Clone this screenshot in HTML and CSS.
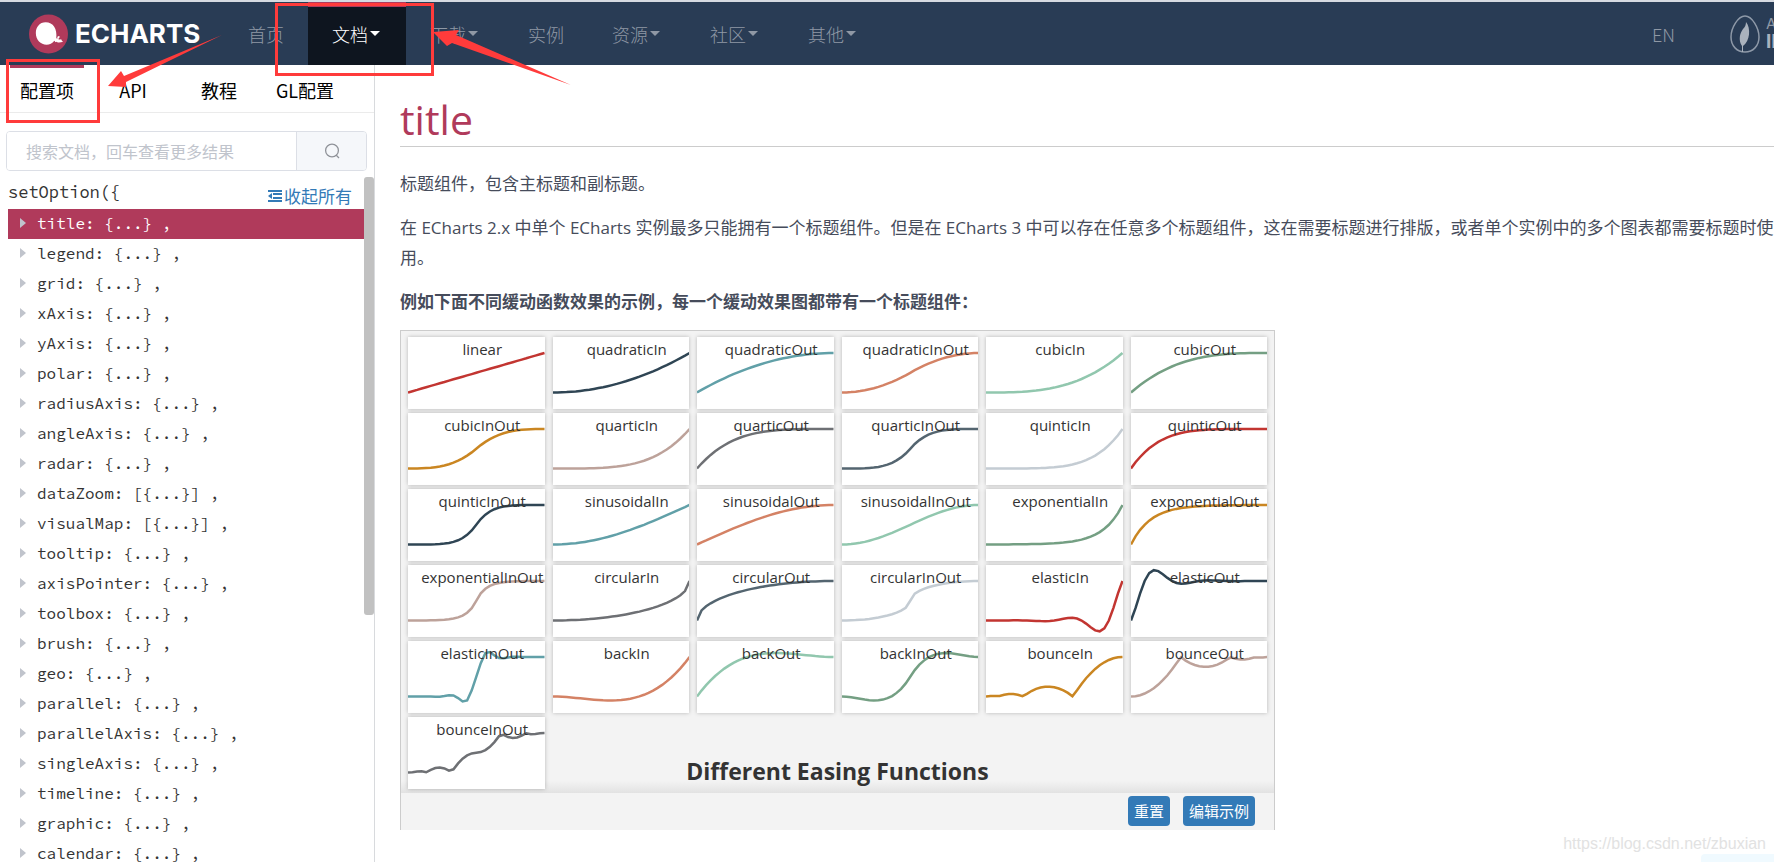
FILE: index.html
```html
<!DOCTYPE html>
<html lang="zh">
<head>
<meta charset="utf-8">
<title>ECharts 配置项手册</title>
<link rel="stylesheet" href="styles.css">
</head>
<body>
<header class="navbar">
  <a class="brand" href="#">
    <svg class="brand-mark" viewBox="0 0 40 40" aria-hidden="true">
      <circle cx="20" cy="20" r="20" fill="#b03a5b"/>
      <path d="M17 8C11 8 7 13 7 19c0 7 5 12 11 12 3 0 6-1 8-4 1 1 1 2 2 1 1 1 4 1 7 0-1-1-2-2-2-3-1 1-2 1-3 0 1-1 2-2 1-3-2 0-2 1-2 3l-1-1C29 15 25 8 17 8z" fill="#fff"/>
    </svg>
    <span class="brand-name">ECHARTS</span>
  </a>
  <nav class="menu">
    <a href="#">首页</a>
    <a class="active caret" href="#">文档</a>
    <a class="caret" href="#">下载</a>
    <a href="#">实例</a>
    <a class="caret" href="#">资源</a>
    <a class="caret" href="#">社区</a>
    <a class="caret" href="#">其他</a>
  </nav>
  <div class="nav-right">
    <a class="lang" href="#">EN</a>
    <a class="incubator" href="#">
      <svg class="feather" viewBox="0 0 30 38" aria-hidden="true">
        <path d="M15 1C8 1 1 13 1 22c0 9 6 15 14 15s14-6 14-15C29 13 22 1 15 1z" fill="none" stroke="#8e99a8" stroke-width="1.5"/>
        <path d="M16 7c5 6 4 19-3 24v6h-1v-6c-4-6-2-13 1-17 2-2 3-4 3-7z" fill="#aab2bd"/>
      </svg>
      <span class="incubator-text"><span class="apache">APACHE</span><span class="inc">INCUBATOR</span></span>
    </a>
  </div>
</header>

<div class="page">
  <aside class="sidebar">
    <nav class="tabs">
      <a class="current" href="#">配置项</a>
      <a href="#">API</a>
      <a href="#">教程</a>
      <a href="#">GL配置</a>
    </nav>
    <form class="search">
      <input type="text" aria-label="搜索文档" placeholder="搜索文档，回车查看更多结果">
      <button type="button" aria-label="搜索">
        <svg viewBox="0 0 16 16" aria-hidden="true"><circle cx="8" cy="7.5" r="6.4"/><path d="M12 12l3 3"/></svg>
      </button>
    </form>
    <div class="tree-wrap">
      <div class="tree">
        <div class="tree-head">
          <span>setOption({</span>
          <a class="collapse" href="#"><svg viewBox="0 0 14 12" aria-hidden="true"><path d="M0 1h14M5 4h9M5 8h9M0 11h14"/><path d="M4 3v6L0 6z" stroke="none" fill="#337ab7"/></svg>收起所有</a>
        </div>
        <ul class="options">
          <li class="selected">title: {...} ,</li>
          <li>legend: {...} ,</li>
          <li>grid: {...} ,</li>
          <li>xAxis: {...} ,</li>
          <li>yAxis: {...} ,</li>
          <li>polar: {...} ,</li>
          <li>radiusAxis: {...} ,</li>
          <li>angleAxis: {...} ,</li>
          <li>radar: {...} ,</li>
          <li>dataZoom: [{...}] ,</li>
          <li>visualMap: [{...}] ,</li>
          <li>tooltip: {...} ,</li>
          <li>axisPointer: {...} ,</li>
          <li>toolbox: {...} ,</li>
          <li>brush: {...} ,</li>
          <li>geo: {...} ,</li>
          <li>parallel: {...} ,</li>
          <li>parallelAxis: {...} ,</li>
          <li>singleAxis: {...} ,</li>
          <li>timeline: {...} ,</li>
          <li>graphic: {...} ,</li>
          <li>calendar: {...} ,</li>
        </ul>
      </div>
      <div class="scrollbar"><div class="thumb"></div></div>
    </div>
  </aside>

  <main class="content">
    <article>
      <h1>title</h1>
      <p>标题组件，包含主标题和副标题。</p>
      <p>在 ECharts 2.x 中单个 ECharts 实例最多只能拥有一个标题组件。但是在 ECharts 3 中可以存在任意多个标题组件，这在需要标题进行排版，或者单个实例中的多个图表都需要标题时使<br>用。</p>
      <p><strong>例如下面不同缓动函数效果的示例，每一个缓动效果图都带有一个标题组件：</strong></p>
      <section class="example">
        <div class="chart">
          <div class="cells" id="cells"></div>
          <h2>Different Easing Functions</h2>
        </div>
        <div class="example-bar">
          <button type="button">重置</button>
          <button type="button">编辑示例</button>
        </div>
      </section>
    </article>
  </main>
</div>

<div class="mark mark-tab"></div>
<div class="mark mark-menu"></div>
<svg class="arrow arrow-tab" viewBox="0 0 116 54" aria-hidden="true"><path d="M1 52L14 37l3 5L115 1 19 48l0 5z"/></svg>
<svg class="arrow arrow-menu" viewBox="0 0 140 56" aria-hidden="true"><path d="M1 2l26-2-3 5L139 55 20 13l-5 3z"/></svg>
<div class="watermark">https://blog.csdn.net/zbuxian</div>
<div class="corner"></div>
<script src="easing.js"></script>
</body>
</html>
```
FILE: styles.css
```css
* { box-sizing: border-box; }
body {
  margin: 0;
  height: 100vh;
  overflow: hidden;
  display: flex;
  flex-direction: column;
  border-top: 2px solid #d6dae1;
  background: #fff;
  color: #464c5b;
  font: 17px/30px "Open Sans", "Noto Sans CJK SC", sans-serif;
}
a { text-decoration: none; color: inherit; }
button, input { font: inherit; }

.navbar {
  flex: none;
  height: 63px;
  display: flex;
  overflow: hidden;
  background: #293c55;
  color: #8f98a5;
  font-family: "Noto Sans CJK SC", sans-serif;
  font-size: 18px;
  font-weight: 300;
}
.brand { display: flex; align-items: center; gap: 7px; width: 224px; padding-left: 29px; flex: none; color: #fff; }
.brand-mark { width: 39px; height: 40px; }
.brand-name { font: 700 26px/40px Inter, sans-serif; }
.menu { display: flex; }
.menu a { display: flex; align-items: center; padding: 0 24px; border-top: 5px solid transparent; border-bottom: 5px solid transparent; }
.menu .caret { padding-right: 26px; }
.menu .caret::after { content: ""; margin-left: 2px; border: 5px solid transparent; border-top-color: currentColor; border-bottom: 0; }
.menu .active { background: #0e151f; color: #fff; border-top-color: #b03a5b; border-bottom-color: #0e151f; }
.nav-right { margin-left: auto; display: flex; align-items: center; }
.lang { margin-right: 55px; }
.incubator { display: flex; align-items: center; gap: 6px; width: 44px; }
.feather { width: 30px; height: 38px; flex: none; }
.incubator-text { display: flex; flex-direction: column; font-family: Inter, sans-serif; }
.apache { font-size: 15px; line-height: 16px; font-weight: 400; }
.inc { font-size: 19px; line-height: 20px; font-weight: 700; color: #aab2bd; }

.page { flex: 1; min-height: 0; display: flex; }
.sidebar { flex: none; width: 375px; border-right: 1px solid #d8dadd; display: flex; flex-direction: column; }
.tabs {
  flex: none;
  display: grid;
  grid-template-columns: repeat(4, 86px);
  height: 48px;
  padding-left: 4px;
  border-bottom: 1px solid #ebebeb;
  color: #000;
  font-size: 18px;
  font-family: "Noto Sans CJK SC", sans-serif;
}
.tabs a { margin: 0 6px; padding-top: 7px; text-align: center; border-top: 3px solid transparent; white-space: nowrap; }
.tabs .current { border-top-color: #b03a5b; }
.search { flex: none; display: flex; height: 40px; margin: 18px 7px 6px 6px; border: 1px solid #dcdfe6; border-radius: 4px; overflow: hidden; }
.search input { flex: 1; min-width: 0; border: 0; padding: 2px 19px 0; font-size: 16px; outline: 0; }
.search input::placeholder { color: #c0c4cc; opacity: 1; }
.search button { width: 70px; border: 0; border-left: 1px solid #dcdfe6; background: #f5f7fa; padding: 0; display: flex; align-items: center; justify-content: center; }
.search svg { width: 16px; height: 16px; fill: none; stroke: #909399; stroke-width: 1.3; }
.tree-wrap { flex: 1; min-height: 0; display: flex; }
.tree { flex: 1; padding-left: 8px; overflow: hidden; font-family: "Source Code Pro", "Noto Sans Mono", "DejaVu Sans Mono", monospace; color: #333; }
.tree-head { display: flex; justify-content: space-between; padding-right: 12px; height: 32px; }
.collapse { display: flex; align-items: center; gap: 2px; padding-top: 6px; font-family: "Noto Sans CJK SC", sans-serif; color: #337ab7; }
.collapse svg { width: 14px; height: 12px; fill: none; stroke: #337ab7; stroke-width: 2; }
.options { list-style: none; margin: 0; padding: 0; font-size: 16px; line-height: 28px; }
.options li { display: flex; align-items: center; gap: 11px; height: 30px; padding: 0 0 2px 12px; white-space: nowrap; }
.options li::before { content: ""; border: 5px solid transparent; border-left: 6px solid #c0c4cc; border-right: 0; }
.options .selected { background: #b03a5b; color: #fff; }
.scrollbar { width: 10px; }
.thumb { height: 64%; background: #c1c1c1; border-radius: 3px; }

.content { flex: 1; min-width: 0; overflow: hidden; }
article { padding: 29px 0 0 25px; margin-right: -40px; }
h1 { margin: 0 0 22px; padding-bottom: 2px; border-bottom: 1px solid #ccc; font-size: 41px; line-height: 50px; font-weight: 400; color: #b03a5b; }
p { margin: 0 0 14px; line-height: 30px; white-space: nowrap; }
p:last-of-type { margin-bottom: 13px; }
strong { font-weight: 700; }
.example { width: 875px; border: 1px solid #ccc; border-bottom: 0; background: #f3f3f3; }
.chart { display: grid; padding: 6px 7px 4px; background: linear-gradient(to top, #e2e2e2, #f3f3f3 12px); }
.cells { grid-area: 1 / 1; display: grid; grid-template-columns: repeat(6, 1fr); gap: 4px 8px; }
.cell { display: grid; height: 72px; background: #fff; box-shadow: 0 0 4px rgba(0, 0, 0, .25); }
.cell svg { grid-area: 1 / 1; width: 100%; height: 72px; fill: none; stroke-width: 2.5; }
.cell span { grid-area: 1 / 1; position: relative; padding-left: 12px; text-align: center; font-size: 15px; line-height: 24px; color: #333; white-space: nowrap; }
h2 { grid-area: 1 / 1; align-self: end; margin: 0; text-align: center; font-size: 23px; line-height: 36px; font-weight: 700; color: #333; }
.example-bar { display: flex; justify-content: flex-end; gap: 13px; padding: 3px 19px 4px; }
.example-bar button { height: 30px; padding: 0 6px; border: 0; border-radius: 4px; background: #337ab7; color: #fff; font-size: 15px; line-height: 28px; }

.mark { position: absolute; border: 3px solid #ff3b3b; }
.mark-tab { left: 6px; top: 59px; width: 94px; height: 64px; }
.mark-menu { left: 275px; top: 3px; width: 159px; height: 73px; }
.arrow { position: absolute; fill: #ff3b3b; }
.arrow-tab { left: 107px; top: 34px; width: 116px; height: 54px; }
.arrow-menu { left: 432px; top: 30px; width: 140px; height: 56px; }
.watermark { position: absolute; right: 8px; bottom: 8px; font: 16px/20px "Liberation Sans", sans-serif; color: #e2e2e2; }
.corner { position: absolute; right: 0; bottom: 0; width: 73px; height: 8px; background: #f0faff; border-top-left-radius: 4px; }
```
FILE: easing.js
```js
const elastic = (k) => Math.pow(2, 10 * (k - 1)) * -Math.sin((k - 1.1) * 5 * Math.PI);
const bounceOut = (k) => {
  if (k < 1 / 2.75) return 7.5625 * k * k;
  if (k < 2 / 2.75) return 7.5625 * (k -= 1.5 / 2.75) * k + 0.75;
  if (k < 2.5 / 2.75) return 7.5625 * (k -= 2.25 / 2.75) * k + 0.9375;
  return 7.5625 * (k -= 2.625 / 2.75) * k + 0.984375;
};
const back = (s) => (k) => k * k * ((s + 1) * k - s);
const families = {
  quadratic: (k) => k ** 2,
  cubic: (k) => k ** 3,
  quartic: (k) => k ** 4,
  quintic: (k) => k ** 5,
  sinusoidal: (k) => 1 - Math.cos(k * Math.PI / 2),
  exponential: (k) => (k === 0 ? 0 : Math.pow(1024, k - 1)),
  circular: (k) => 1 - Math.sqrt(1 - k * k),
  elastic: (k) => (k <= 0 ? 0 : k >= 1 ? 1 : elastic(k)),
  back: back(1.70158),
  bounce: (k) => 1 - bounceOut(1 - k)
};

const easings = [["linear", (k) => k]];
for (const [name, fn] of Object.entries(families)) {
  const half = name === "back" ? back(1.70158 * 1.525) : fn;
  easings.push([name + "In", fn]);
  easings.push([name + "Out", (k) => 1 - fn(1 - k)]);
  easings.push([name + "InOut", (k) => (k < 0.5 ? half(2 * k) / 2 : 1 - half(2 - 2 * k) / 2)]);
}

const colors = ["#c23531", "#2f4554", "#61a0a8", "#d48265", "#91c7ae", "#749f83",
  "#ca8622", "#bda29a", "#6e7074", "#546570", "#c4ccd3"];
const steps = 30;
document.getElementById("cells").innerHTML = easings.map(([name, fn], i) => {
  const points = [];
  for (let s = 0; s <= steps; s++) {
    points.push((136 * s / steps).toFixed(1) + "," + (55.5 - 39.5 * fn(s / steps)).toFixed(1));
  }
  return `<div class="cell"><svg viewBox="0 0 136 72" preserveAspectRatio="none"><polyline stroke="${colors[i % 11]}" points="${points.join(" ")}"/></svg><span>${name}</span></div>`;
}).join("");
```
